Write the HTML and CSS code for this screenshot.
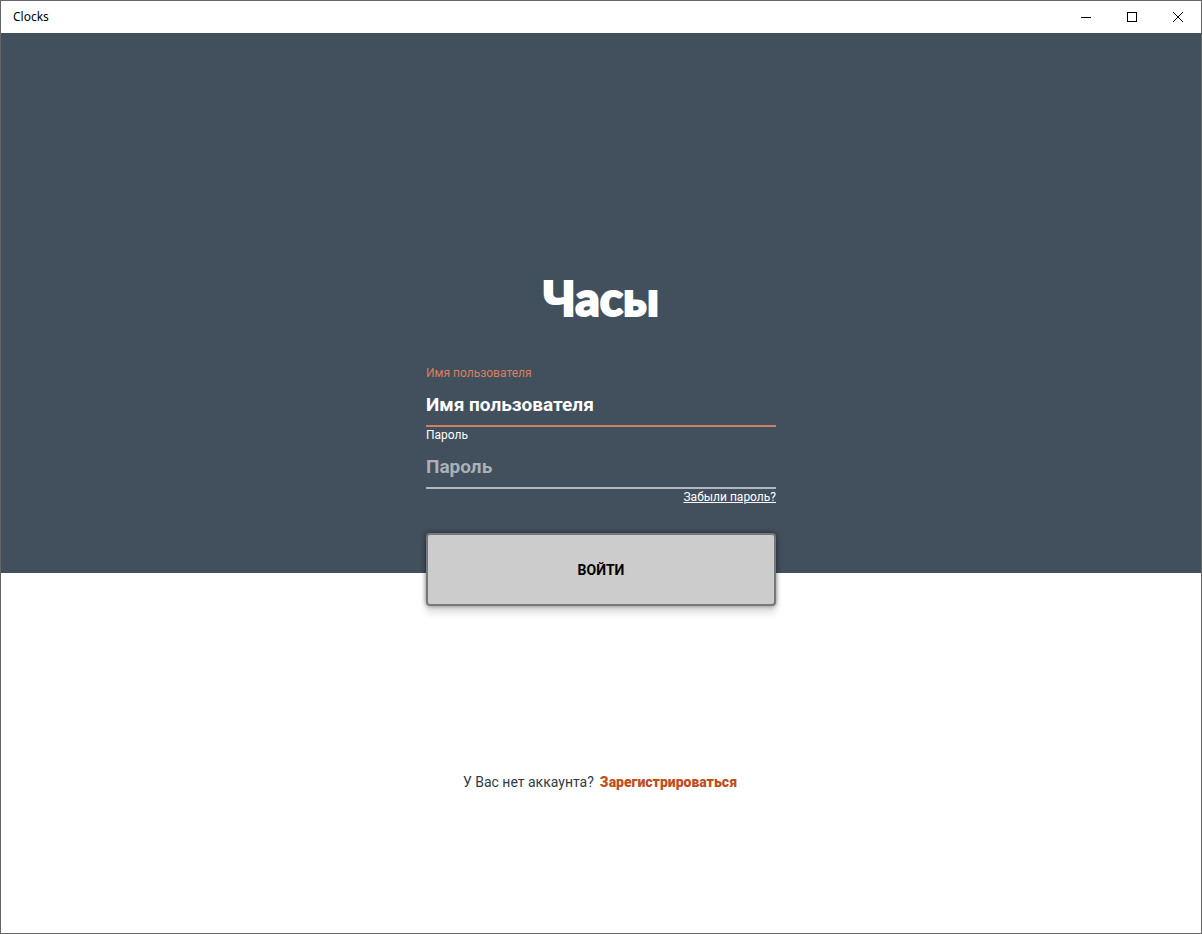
FILE: index.html
```html
<!DOCTYPE html>
<html lang="ru">
<head>
<meta charset="utf-8">
<meta name="viewport" content="width=device-width, initial-scale=1">
<title>Clocks</title>
<link rel="stylesheet" href="styles.css">
</head>
<body>
<div class="window">
  <header class="titlebar">
    <span class="titlebar-name">Clocks</span>
    <div class="titlebar-controls">
      <button class="control" type="button" aria-label="Свернуть"><svg viewBox="0 0 10 10" shape-rendering="crispEdges"><path d="M0 5.5H10"/></svg></button>
      <button class="control" type="button" aria-label="Развернуть"><svg viewBox="0 0 10 10" shape-rendering="crispEdges"><path d="M.5 .5H9.5V9.5H.5Z"/></svg></button>
      <button class="control" type="button" aria-label="Закрыть"><svg viewBox="0 0 10 10"><path d="M0 0L10 10M10 0L0 10"/></svg></button>
    </div>
  </header>
  <main class="content">
    <section class="hero">
      <h1 class="title">Часы</h1>
      <form class="login">
        <div class="field field-active">
          <label class="field-label" for="username">Имя пользователя</label>
          <input class="field-input" id="username" type="text" value="Имя пользователя">
        </div>
        <div class="field">
          <label class="field-label" for="password">Пароль</label>
          <input class="field-input" id="password" type="password" placeholder="Пароль">
        </div>
        <a class="forgot" href="#">Забыли пароль?</a>
        <button class="submit" type="submit">ВОЙТИ</button>
      </form>
    </section>
    <section class="signup">
      <span>У Вас нет аккаунта?</span>
      <a class="signup-link" href="#">Зарегистрироваться</a>
    </section>
  </main>
</div>
</body>
</html>
```

FILE: styles.css
```css
* {
  box-sizing: border-box;
}

body {
  margin: 0;
  font-family: Roboto, "Noto Sans", sans-serif;
  color: #2f3b48;
  background: #fff;
}

.window {
  display: flex;
  flex-direction: column;
  min-height: 100vh;
  border: 1px solid #666;
  background: #fff;
}

.titlebar {
  display: flex;
  align-items: center;
  justify-content: space-between;
  height: 32px;
  padding-left: 12px;
  font: 12px/16px "Noto Sans", sans-serif;
  color: #000;
}

.titlebar-controls {
  display: flex;
  height: 100%;
}

.control {
  display: flex;
  align-items: center;
  justify-content: center;
  width: 46px;
  padding: 0;
  border: 0;
  background: none;
}

.control svg {
  width: 10px;
  height: 10px;
  fill: none;
  stroke: #000;
  overflow: visible;
}

.content {
  flex: 1;
  display: grid;
  grid-template-rows: 3fr 2fr;
}

.hero {
  display: flex;
  flex-direction: column;
  align-items: center;
  justify-content: flex-end;
  padding: 0 16px;
  background: #424f5c;
}

.title {
  margin: 0 0 35px;
  font: 900 48px/64px Lato, "Noto Sans", sans-serif;
  color: #fff;
  -webkit-text-stroke: 2px #fff;
}

.login {
  display: flex;
  flex-direction: column;
  width: 100%;
  max-width: 350px;
  margin-bottom: -33px;
}

.field {
  display: flex;
  flex-direction: column;
  color: #fff;
}

.field-label {
  font-size: 12px;
  line-height: 16px;
}

.field-active .field-label {
  color: #d9805f;
}

.field-input {
  height: 46px;
  padding: 2px 0 0;
  border: 0;
  border-bottom: 2px solid #b0b7c0;
  border-radius: 0;
  outline: 0;
  background: none;
  font: 700 19px/24px Roboto, sans-serif;
  color: #fff;
}

.field-active .field-input {
  border-bottom-color: #cc8066;
}

.field-input::placeholder {
  color: #a9b0b8;
  opacity: 1;
}

.forgot {
  align-self: flex-end;
  font-size: 12px;
  line-height: 16px;
  color: #fff;
}

.submit {
  height: 73px;
  margin-top: 28px;
  border: 2px solid #77787b;
  border-radius: 4px;
  background: #ccc;
  box-shadow: 0 0 5px rgba(0, 0, 0, 0.5), 0 8px 6px rgba(0, 0, 0, 0.1);
  font: 700 14px/20px Roboto, sans-serif;
  color: #000;
}

.signup {
  display: flex;
  align-items: center;
  justify-content: center;
  gap: 6px;
  padding: 58px 2px 0 0;
  font-size: 14px;
  line-height: 20px;
}

.signup-link {
  font-weight: 900;
  color: #bf4e20;
  text-decoration: none;
}
```
